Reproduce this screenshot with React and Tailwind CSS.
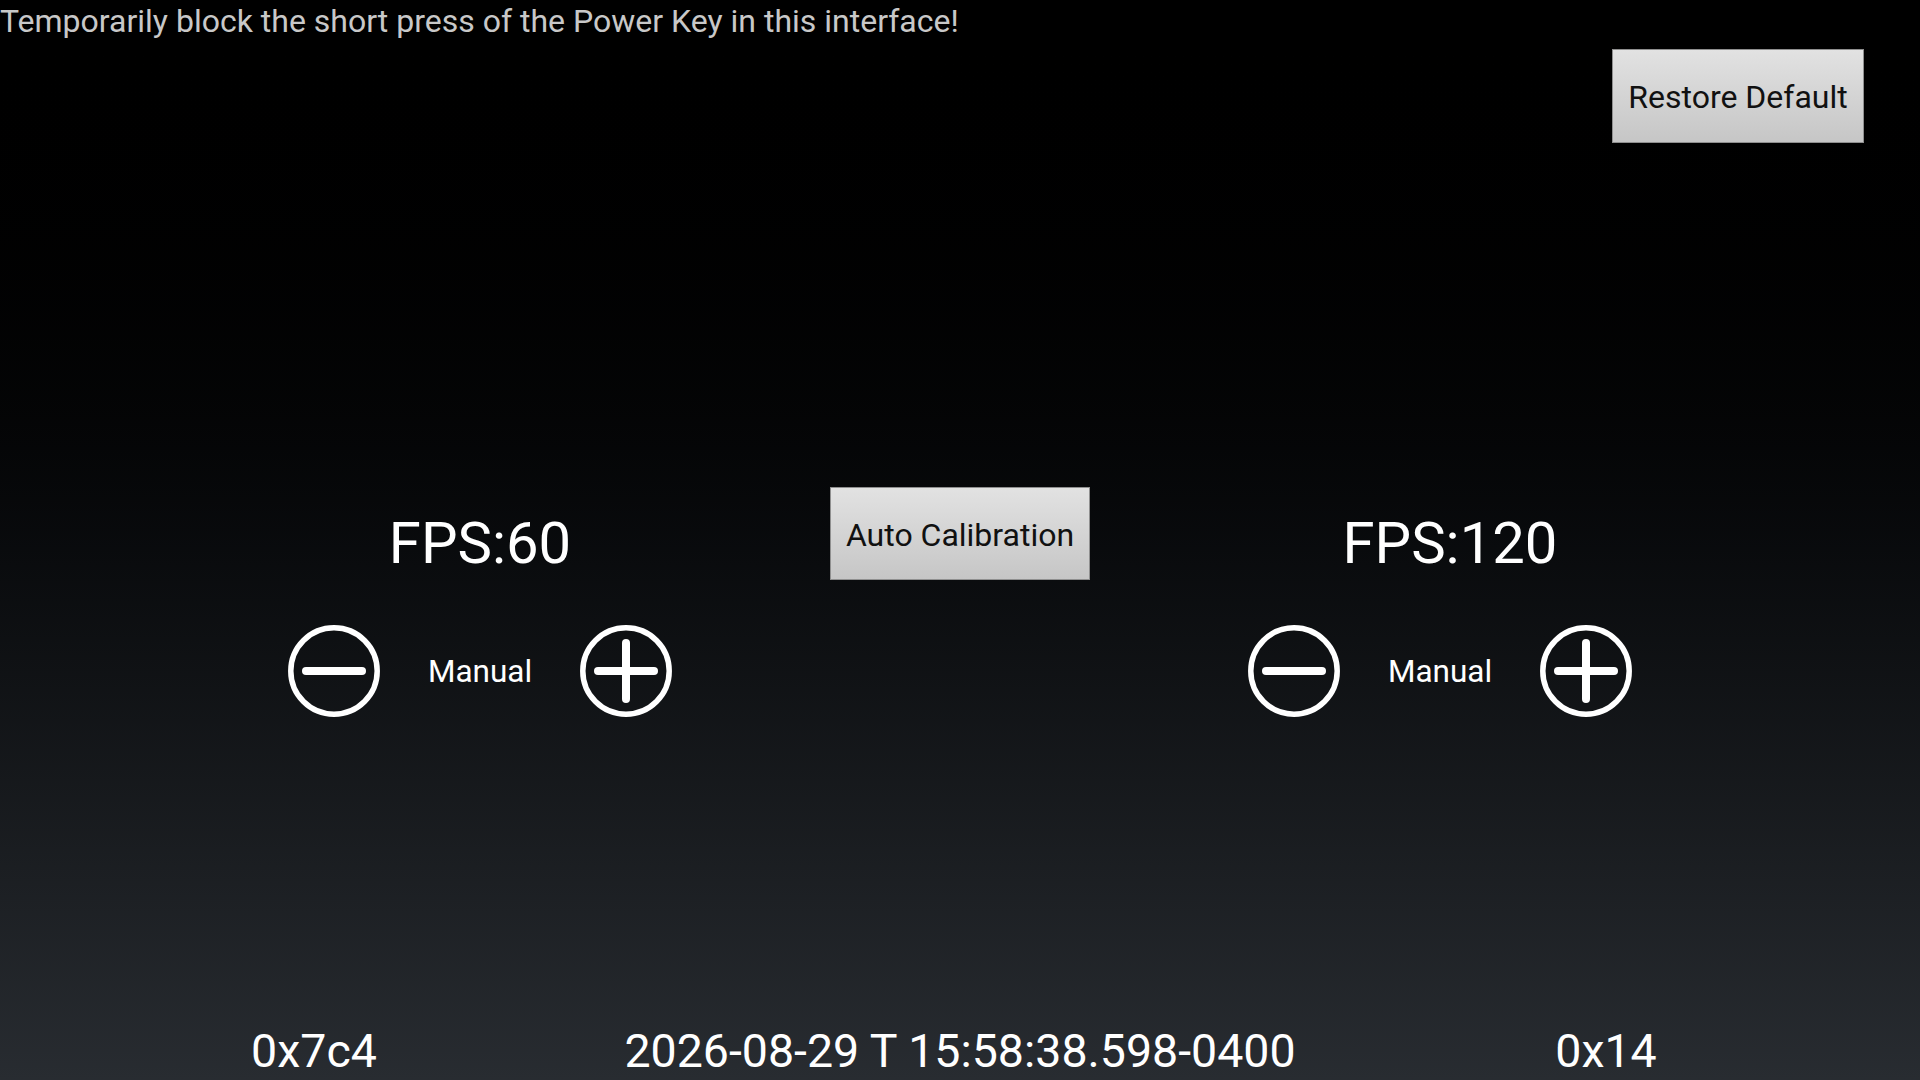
import React from "react";

function CircleIcon({ plus }) {
  return (
    <svg width="92" height="92" viewBox="0 0 92 92" className="block shrink-0">
      <circle cx="46" cy="46" r="43.2" fill="none" stroke="#ffffff" strokeWidth="5.5" />
      <line x1="18" y1="46" x2="74" y2="46" stroke="#ffffff" strokeWidth="8" strokeLinecap="round" />
      {plus && <line x1="46" y1="18" x2="46" y2="74" stroke="#ffffff" strokeWidth="8" strokeLinecap="round" />}
    </svg>
  );
}

function FpsPanel({ fps, shift }) {
  return (
    <div className="flex flex-col items-center pt-[22px]">
      <div className={`text-[58px] leading-[68px] text-white ${shift}`}>{fps}</div>
      <div className="mt-[48px] flex items-center gap-[47px]">
        <CircleIcon />
        <span className="w-[106px] text-center text-[31.5px] leading-[37px] text-white">Manual</span>
        <CircleIcon plus />
      </div>
    </div>
  );
}

export default function App() {
  return (
    <div
      className="flex h-[1080px] w-[1920px] flex-col overflow-hidden bg-gradient-to-b from-[#000000] to-[#282c31]"
      style={{ fontFamily: "Roboto, 'Noto Sans', Arial, sans-serif" }}
    >
      <div className="flex items-start justify-between">
        <div className="pt-[2px] text-[32px] leading-[38px] text-[#c8c8c8]">
          Temporarily block the short press of the Power Key in this interface!
        </div>
        <button className="mr-[56px] mt-[49px] flex h-[94px] w-[252px] items-center justify-center border border-[#8f8f8f] bg-gradient-to-b from-[#e2e2e2] to-[#c6c6c6] pt-[1px] text-[32px] text-[#111111]">
          Restore Default
        </button>
      </div>

      <div className="mt-[344px] grid grid-cols-[1fr_0px_1fr]">
        <FpsPanel fps="FPS:60" shift="" />
        <div className="flex justify-center">
          <button className="flex h-[93px] w-[260px] shrink-0 items-center justify-center border border-[#8f8f8f] bg-gradient-to-b from-[#e2e2e2] to-[#c6c6c6] pt-[2px] text-[32px] text-[#111111]">
            Auto Calibration
          </button>
        </div>
        <FpsPanel fps="FPS:120" shift="ml-[20px]" />
      </div>

      <div className="mt-auto grid grid-cols-[628px_664px_628px] pb-[2px] text-[46.5px] leading-[54px] text-white">
        <div className="flex justify-center">0x7c4</div>
        <div className="flex justify-center whitespace-nowrap">
          <span className="shrink-0">2026-08-29 T 15:58:38.598-0400</span>
        </div>
        <div className="flex justify-center">0x14</div>
      </div>
    </div>
  );
}
